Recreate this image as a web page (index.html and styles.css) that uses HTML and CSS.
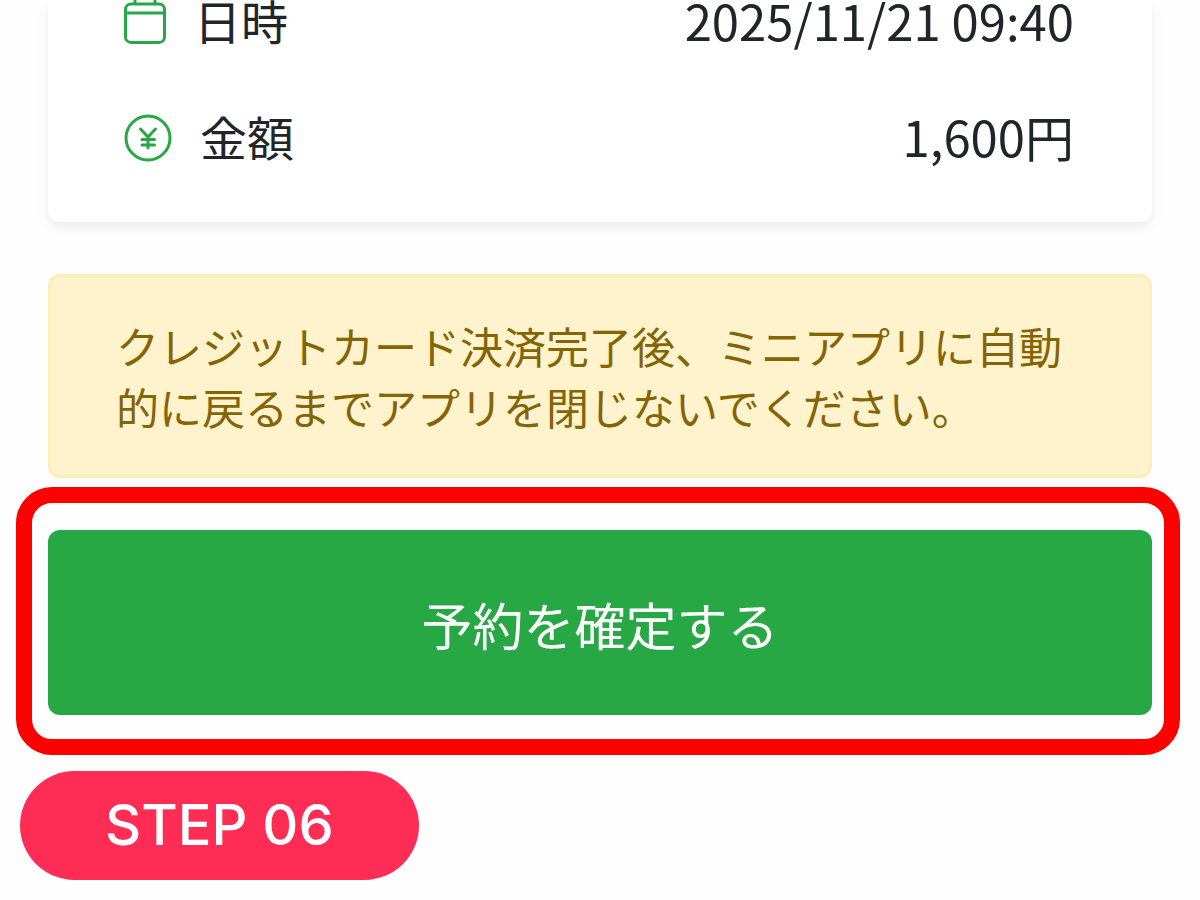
FILE: index.html
```html
<!DOCTYPE html>
<html lang="ja">
<head>
<meta charset="utf-8">
<meta name="viewport" content="width=device-width, initial-scale=1">
<title>予約の確定</title>
<link rel="stylesheet" href="styles.css">
</head>
<body>
<main class="page">
  <dl class="summary">
    <div class="row">
      <dt class="row-label">
        <svg class="icon icon-calendar" viewBox="0 0 42 44" aria-hidden="true">
          <rect x="1.5" y="4" width="39" height="38.400" rx="5.500"/>
          <path d="M1.5 13h39M11 -4V4M31 -4V4"/>
        </svg>
        <span class="row-text">日時</span>
      </dt>
      <dd class="row-value row-text">2025/11/21 09:40</dd>
    </div>
    <div class="row">
      <dt class="row-label">
        <svg class="icon icon-yen" viewBox="0 0 48 48" aria-hidden="true">
          <circle cx="24" cy="24" r="22"/>
          <path d="M16.500 15L24 23L31.500 15M24 23V34M18 25.500H30.500M18 31H30.500" stroke-linecap="round"/>
        </svg>
        <span class="row-text">金額</span>
      </dt>
      <dd class="row-value row-text">1,600円</dd>
    </div>
  </dl>
  <p class="notice">クレジットカード決済完了後、ミニアプリに自動的に戻るまでアプリを閉じないでください。</p>
  <div class="highlight">
    <button class="confirm" type="button">予約を確定する</button>
  </div>
  <div class="step">STEP 06</div>
</main>
</body>
</html>
```
FILE: styles.css
```css
* {
  box-sizing: border-box;
}

body {
  margin: 0;
  background: #fefefe;
  color: #212529;
  font-family: "Noto Sans CJK JP", sans-serif;
}

.page {
  display: flex;
  flex-direction: column;
}

.summary {
  display: flex;
  flex-direction: column;
  gap: 72px;
  margin: 0 48px;
  padding: 0 78px 62px 76px;
  border-radius: 0 0 12px 12px;
  background: #fff;
  box-shadow: 0 6px 12px rgba(0, 0, 0, 0.07);
}

.row {
  display: flex;
  align-items: center;
  justify-content: space-between;
  line-height: 40px;
}

.row-label {
  display: flex;
  align-items: center;
  gap: 28px;
  font-size: 47px;
}

.row-text {
  padding-bottom: 4px;
}

.row-value {
  margin: 0;
  font-size: 49px;
}

.icon {
  flex: none;
  fill: none;
  stroke: #28a745;
  stroke-width: 3;
}

.icon-calendar {
  width: 42px;
  height: 44px;
}

.icon-yen {
  width: 48px;
  height: 48px;
  margin: -2px 0;
}

.notice {
  margin: 52px 48px 0;
  padding: 38px 65px;
  border: 3px solid #ffeeba;
  border-radius: 12px;
  background: #fff3cd;
  color: #856404;
  font-size: 43px;
  line-height: 61px;
}

.highlight {
  margin: 9px 20px 0 16px;
  padding: 27px 12px 24px 16px;
  border: 16px solid #f00;
  border-radius: 36px;
}

.confirm {
  display: block;
  width: 100%;
  padding: 58px 24px 54px;
  border: 0;
  border-radius: 12px;
  background: #28a745;
  color: #fff;
  font-family: inherit;
  font-size: 51px;
  line-height: 73px;
}

.step {
  align-self: flex-start;
  margin: 16px 20px 20px;
  padding: 0 85px;
  border-radius: 55px;
  background: #ff2d55;
  color: #fff;
  font-family: Inter, sans-serif;
  font-size: 56px;
  font-weight: 500;
  line-height: 109px;
}
```
